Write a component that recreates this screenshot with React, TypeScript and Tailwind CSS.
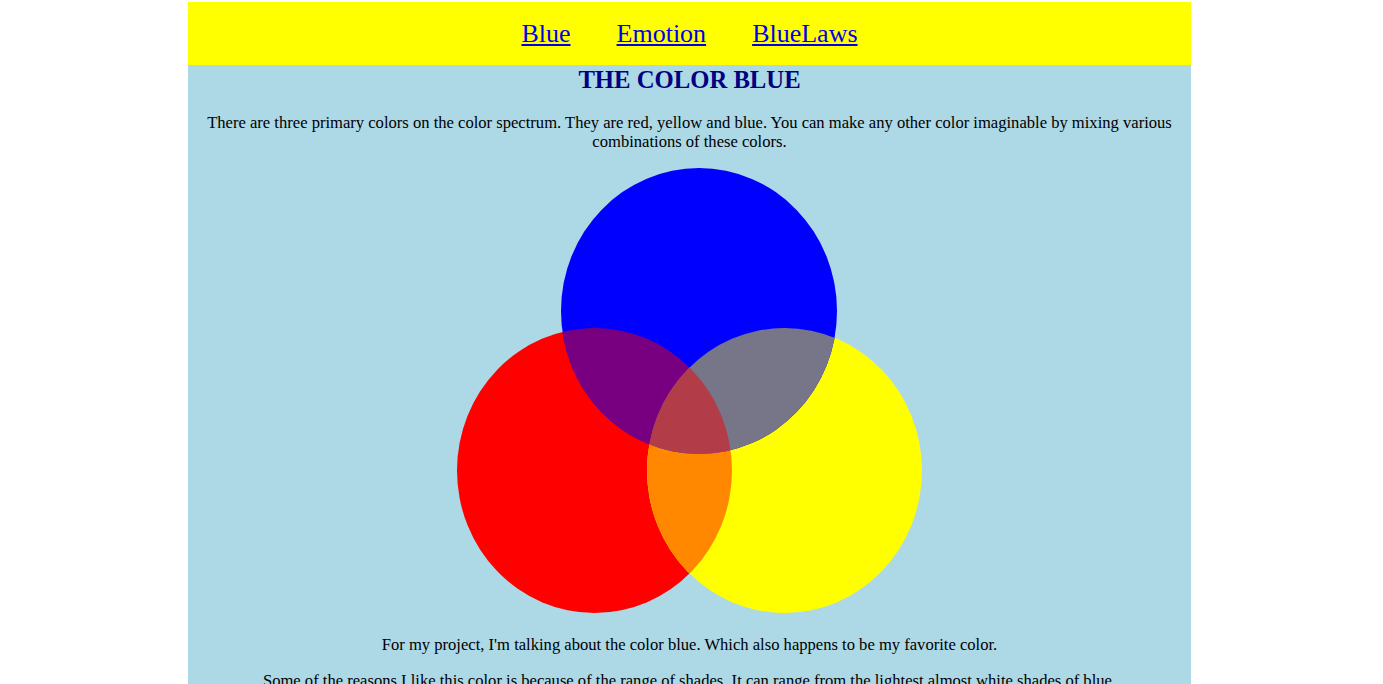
import React from "react";

const serif = { fontFamily: '"Liberation Serif", "Times New Roman", serif' };

function ColorWheel() {
    // three primaries, overlaps filled with their mixed colours
    const blue = { cx: 242, cy: 143, rx: 138, ry: 143 };
    const red = { cx: 137.5, cy: 302.5, rx: 137.5, ry: 142.5 };
    const yellow = { cx: 327.5, cy: 302.5, rx: 137.5, ry: 142.5 };

    return (
        <svg width="466" height="446" viewBox="0 0 466 446" className="block mx-auto">
            <defs>
                <clipPath id="clipRed">
                    <ellipse {...red} />
                </clipPath>
                <clipPath id="clipYellow">
                    <ellipse {...yellow} />
                </clipPath>
                <clipPath id="clipBlue">
                    <ellipse {...blue} />
                </clipPath>
            </defs>

            <ellipse {...red} fill="#ff0000" />
            <ellipse {...yellow} fill="#ffff00" />
            <ellipse {...blue} fill="#0000ff" />

            <g clipPath="url(#clipRed)">
                <ellipse {...yellow} fill="#ff8800" />
            </g>
            <g clipPath="url(#clipRed)">
                <ellipse {...blue} fill="#780080" />
            </g>
            <g clipPath="url(#clipYellow)">
                <ellipse {...blue} fill="#767688" />
            </g>
            <g clipPath="url(#clipRed)">
                <g clipPath="url(#clipYellow)">
                    <ellipse {...blue} fill="#b23c48" />
                </g>
            </g>
        </svg>
    );
}

export default function App() {
    const links = ["Blue", "Emotion", "BlueLaws"];

    return (
        <div className="min-h-screen bg-white pt-[2px]" style={serif}>
            <div className="ml-[188px] w-[1003px] bg-[#add8e6] min-h-[682px]">
                <nav className="flex justify-center items-center gap-[46px] h-[63px] bg-[#ffff00]">
                    {links.map((link) => (
                        <a key={link} href="#" className="text-[26px] text-[#0000ee] underline">
                            {link}
                        </a>
                    ))}
                </nav>

                <h2 className="pt-[1px] text-center text-[24.7px] font-bold text-[#000080] leading-[28px]">
                    THE COLOR BLUE
                </h2>

                <p className="mt-[19px] px-[10px] text-center text-[16.58px] leading-[19px] text-black">
                    There are three primary colors on the color spectrum. They are red, yellow and blue. You can make any other color imaginable by mixing various combinations of these colors.
                </p>

                <div className="mt-[17px]">
                    <ColorWheel />
                </div>

                <p className="mt-[21px] px-[10px] text-center text-[16.58px] leading-[19px] text-black">
                    For my project, I'm talking about the color blue. Which also happens to be my favorite color.
                </p>

                <p className="mt-[17px] px-[10px] text-center text-[16.58px] leading-[19px] text-black">
                    Some of the reasons I like this color is because of the range of shades. It can range from the lightest almost white shades of blue.
                </p>
            </div>
        </div>
    );
}
